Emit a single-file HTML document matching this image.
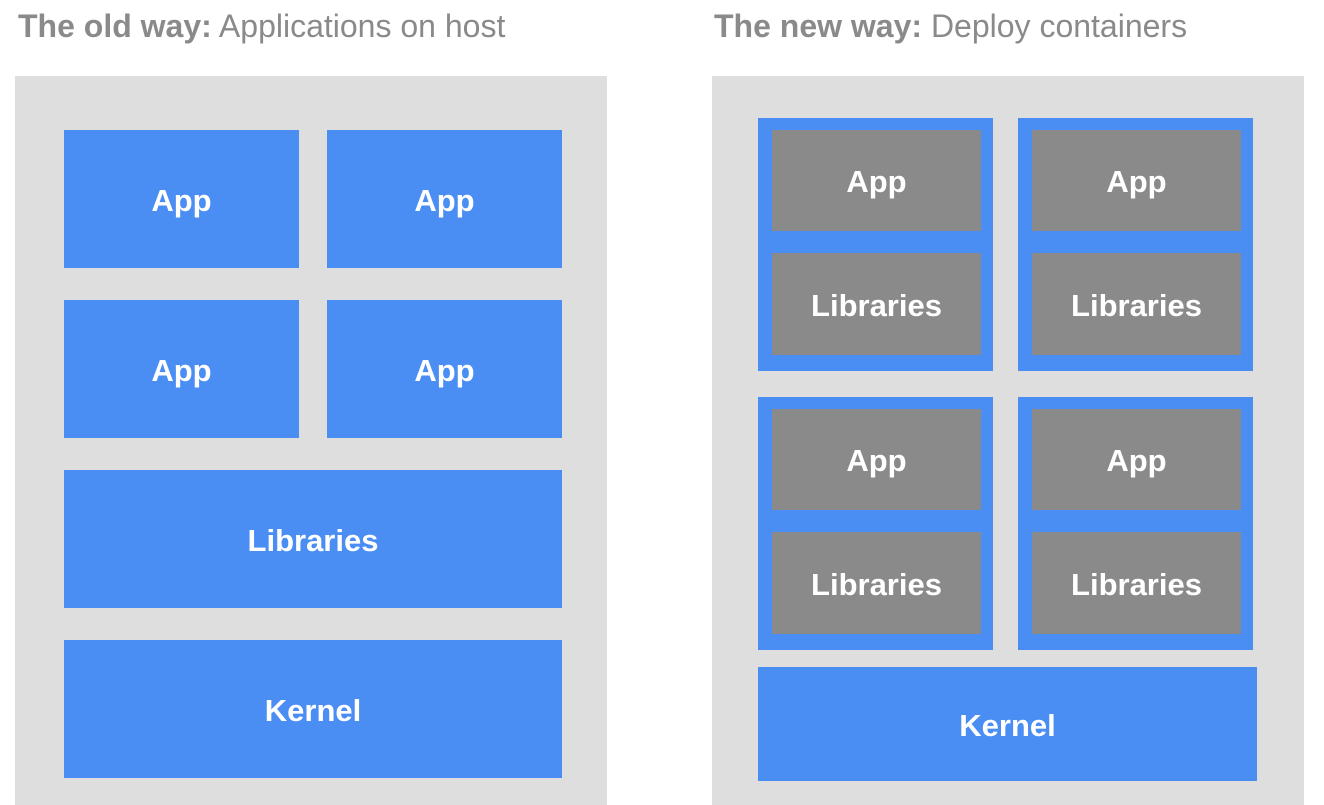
<!DOCTYPE html>
<html><head><style>
body{margin:0;width:1324px;height:805px;background:#fff;position:relative;overflow:hidden;font-family:"Liberation Sans",sans-serif}
.t{position:absolute;top:8px;font-size:32px;color:#8a8a8a;white-space:nowrap}
.t b{font-weight:bold}
.p{position:absolute;background:#dedede;top:76px;height:729px;width:592px}
.b,.g{position:absolute;color:#fff;font-weight:bold;font-size:31px;display:flex;align-items:center;justify-content:center;padding-top:3px;box-sizing:border-box}
.b{background:#4a8ef4}
.g{background:#8a8a8a}
.c{position:absolute;background:#4a8ef4}
</style></head><body>
<div class="t" style="left:18px"><b>The old way:</b> Applications on host</div>
<div class="t" style="left:714px"><b>The new way:</b> Deploy containers</div>
<div class="p" style="left:15px"></div>
<div class="p" style="left:712px"></div>
<div class="b" style="left:64px;top:130px;width:235px;height:138px">App</div>
<div class="b" style="left:327px;top:130px;width:235px;height:138px">App</div>
<div class="b" style="left:64px;top:300px;width:235px;height:138px">App</div>
<div class="b" style="left:327px;top:300px;width:235px;height:138px">App</div>
<div class="b" style="left:64px;top:470px;width:498px;height:138px">Libraries</div>
<div class="b" style="left:64px;top:640px;width:498px;height:138px">Kernel</div>

<div class="c" style="left:758px;top:118px;width:235px;height:253px"></div>
<div class="c" style="left:1018px;top:118px;width:235px;height:253px"></div>
<div class="c" style="left:758px;top:397px;width:235px;height:253px"></div>
<div class="c" style="left:1018px;top:397px;width:235px;height:253px"></div>
<div class="g" style="left:772px;top:130px;width:209px;height:101px">App</div>
<div class="g" style="left:772px;top:253px;width:209px;height:102px">Libraries</div>
<div class="g" style="left:1032px;top:130px;width:209px;height:101px">App</div>
<div class="g" style="left:1032px;top:253px;width:209px;height:102px">Libraries</div>
<div class="g" style="left:772px;top:409px;width:209px;height:101px">App</div>
<div class="g" style="left:772px;top:532px;width:209px;height:102px">Libraries</div>
<div class="g" style="left:1032px;top:409px;width:209px;height:101px">App</div>
<div class="g" style="left:1032px;top:532px;width:209px;height:102px">Libraries</div>
<div class="b" style="left:758px;top:667px;width:499px;height:114px">Kernel</div>
</body></html>
